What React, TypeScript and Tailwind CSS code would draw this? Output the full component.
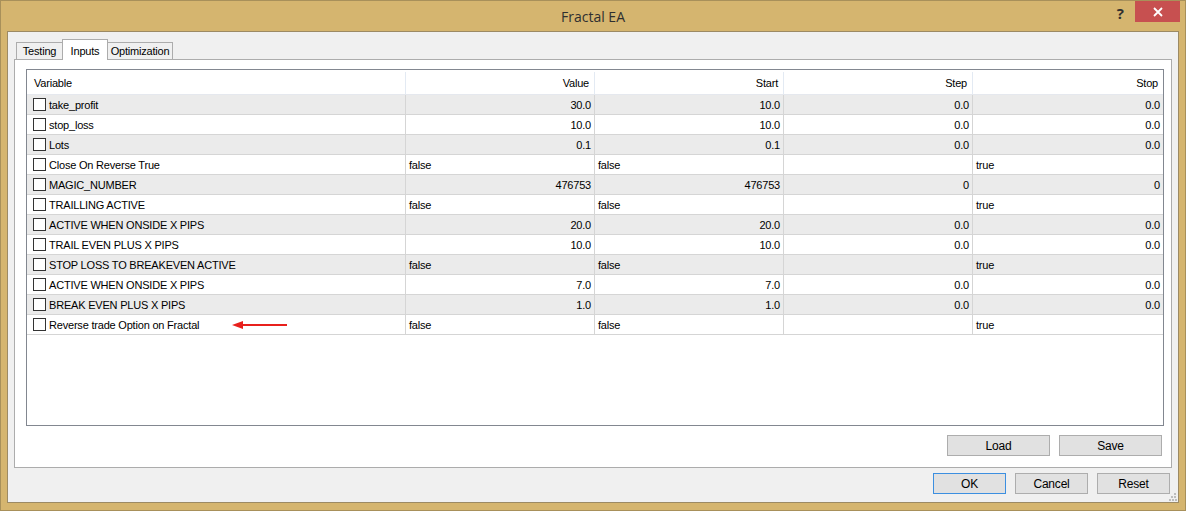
import React from 'react';

type Row = {
  name: string;
  value: string;
  start: string;
  step: string;
  stop: string;
  text?: boolean;
  arrow?: boolean;
};

const rows: Row[] = [
  { name: 'take_profit', value: '30.0', start: '10.0', step: '0.0', stop: '0.0' },
  { name: 'stop_loss', value: '10.0', start: '10.0', step: '0.0', stop: '0.0' },
  { name: 'Lots', value: '0.1', start: '0.1', step: '0.0', stop: '0.0' },
  { name: 'Close On Reverse True', value: 'false', start: 'false', step: '', stop: 'true', text: true },
  { name: 'MAGIC_NUMBER', value: '476753', start: '476753', step: '0', stop: '0' },
  { name: 'TRAILLING ACTIVE', value: 'false', start: 'false', step: '', stop: 'true', text: true },
  { name: 'ACTIVE WHEN ONSIDE X PIPS', value: '20.0', start: '20.0', step: '0.0', stop: '0.0' },
  { name: 'TRAIL EVEN PLUS X PIPS', value: '10.0', start: '10.0', step: '0.0', stop: '0.0' },
  { name: 'STOP LOSS TO BREAKEVEN ACTIVE', value: 'false', start: 'false', step: '', stop: 'true', text: true },
  { name: 'ACTIVE WHEN ONSIDE X PIPS', value: '7.0', start: '7.0', step: '0.0', stop: '0.0' },
  { name: 'BREAK EVEN PLUS X PIPS', value: '1.0', start: '1.0', step: '0.0', stop: '0.0' },
  { name: 'Reverse trade Option on Fractal', value: 'false', start: 'false', step: '', stop: 'true', text: true, arrow: true },
];

function Cell({ children, w, text, last }: { children?: React.ReactNode; w: string; text?: boolean; last?: boolean }) {
  return (
    <div
      className={`${w} h-full flex items-center pt-[2px] ${text ? 'justify-start pl-[3px]' : 'justify-end pr-[3px]'} ${
        last ? '' : 'border-r border-[#d5d5d5]'
      }`}
    >
      {children}
    </div>
  );
}

function Button({ label, w, primary }: { label: string; w: string; primary?: boolean }) {
  return (
    <div
      className={`${w} h-[21px] flex items-center justify-center bg-[#e1e1e1] border text-[12px] text-black ${
        primary ? 'border-[#3c8fe0]' : 'border-[#adadad]'
      }`}
    >
      {label}
    </div>
  );
}

export default function App() {
  return (
    <div className="w-[1186px] h-[511px] bg-[#d5b56f] border border-[#a8905a] flex flex-col font-['Liberation_Sans',Arial,sans-serif] text-[11px] tracking-[-0.2px] text-black">
      {/* title bar */}
      <div className="h-[30px] grid grid-cols-[1fr_auto_1fr] items-start">
        <div />
        <div className="pt-[5px] font-['Open_Sans',sans-serif] text-[14px] tracking-normal text-[#2f2f2f]">Fractal EA</div>
        <div className="flex justify-end items-start">
          <div className="mt-[3px] mr-[11px] font-['Open_Sans',sans-serif] text-[15px] font-bold tracking-normal leading-[18px] text-[#303030]">?</div>
          <div className="w-[45px] h-[21px] bg-[#c75050] flex items-center justify-center mr-[5px]">
            <svg width="10" height="10" viewBox="0 0 10 10">
              <path d="M1 1 L9 9 M9 1 L1 9" stroke="#ffffff" strokeWidth="1.8" />
            </svg>
          </div>
        </div>
      </div>

      {/* client */}
      <div className="relative mx-[6px] h-[472px] bg-[#f0f0f0] border border-[#9c8a64] flex flex-col pt-[7px]">
        {/* tabs */}
        <div className="h-[20px] ml-[8px] flex items-end">
          <div className="w-[46px] h-[17px] border border-r-0 border-b-0 border-[#acacac] bg-[#f0f0f0] flex items-center justify-center">
            Testing
          </div>
          <div className="relative z-10 w-[46px] h-[21px] -mb-px border border-b-0 border-[#acacac] bg-white flex items-start justify-center pt-[3px]">
            Inputs
          </div>
          <div className="w-[65px] h-[17px] border border-l-0 border-b-0 border-[#acacac] bg-[#f0f0f0] flex items-center justify-center">
            Optimization
          </div>
        </div>

        {/* tab panel */}
        <div className="ml-[6px] w-[1158px] h-[409px] bg-white border border-[#acacac] flex flex-col pt-[9px] pl-[11px]">
          <div className="w-[1138px] h-[357px] border border-[#828790] bg-white flex flex-col">
            <div className="h-[25px] flex border-b border-[#e5e8ee] bg-white pt-[2px]">
              <div className="w-[379px] h-full flex items-center pl-[7px] border-r border-[#e3eaf3]">Variable</div>
              <div className="w-[189px] h-full flex items-center justify-end pr-[5px] border-r border-[#e3eaf3]">Value</div>
              <div className="w-[189px] h-full flex items-center justify-end pr-[5px] border-r border-[#e3eaf3]">Start</div>
              <div className="w-[189px] h-full flex items-center justify-end pr-[5px] border-r border-[#e3eaf3]">Step</div>
              <div className="w-[190px] h-full flex items-center justify-end pr-[5px]">Stop</div>
            </div>
            {rows.map((r, i) => (
              <div
                key={i}
                className={`h-[20px] flex border-b border-[#d5d5d5] ${i % 2 === 0 ? 'bg-[#ebebeb]' : 'bg-white'}`}
              >
                <div className="w-[379px] h-full flex items-center pl-[6px] border-r border-[#d5d5d5]">
                  <div className="w-[13px] h-[13px] border border-[#333333] bg-white mr-[3px]" />
                  <span className="pt-[2px]">{r.name}</span>
                  {r.arrow && (
                    <svg className="ml-[33px] mt-[1px]" width="56" height="10" viewBox="0 0 56 10">
                      <path d="M0 5 L11 1 L11 9 Z" fill="#e8201c" />
                      <path d="M9 5 L55 5" stroke="#e8201c" strokeWidth="2" />
                    </svg>
                  )}
                </div>
                <Cell w="w-[189px]" text={r.text}>{r.value}</Cell>
                <Cell w="w-[189px]" text={r.text}>{r.start}</Cell>
                <Cell w="w-[189px]" text={r.text}>{r.step}</Cell>
                <Cell w="w-[190px]" text={r.text} last>{r.stop}</Cell>
              </div>
            ))}
          </div>
          <div className="mt-[9px] pr-[9px] flex justify-end gap-[9px]">
            <Button label="Load" w="w-[103px]" />
            <Button label="Save" w="w-[103px]" />
          </div>
        </div>

        {/* dialog buttons */}
        <div className="mt-[5px] pr-[8px] flex justify-end gap-[9px]">
          <Button label="OK" w="w-[73px]" primary />
          <Button label="Cancel" w="w-[73px]" />
          <Button label="Reset" w="w-[73px]" />
        </div>

        <svg className="absolute right-[1px] bottom-[1px]" width="8" height="8" viewBox="0 0 8 8">
          <rect x="5" y="0" width="2" height="2" fill="#bdbdbd" />
          <rect x="2" y="3" width="2" height="2" fill="#bdbdbd" />
          <rect x="5" y="3" width="2" height="2" fill="#bdbdbd" />
          <rect x="0" y="6" width="2" height="2" fill="#bdbdbd" />
          <rect x="3" y="6" width="2" height="2" fill="#bdbdbd" />
          <rect x="6" y="6" width="2" height="2" fill="#bdbdbd" />
        </svg>
      </div>
    </div>
  );
}
